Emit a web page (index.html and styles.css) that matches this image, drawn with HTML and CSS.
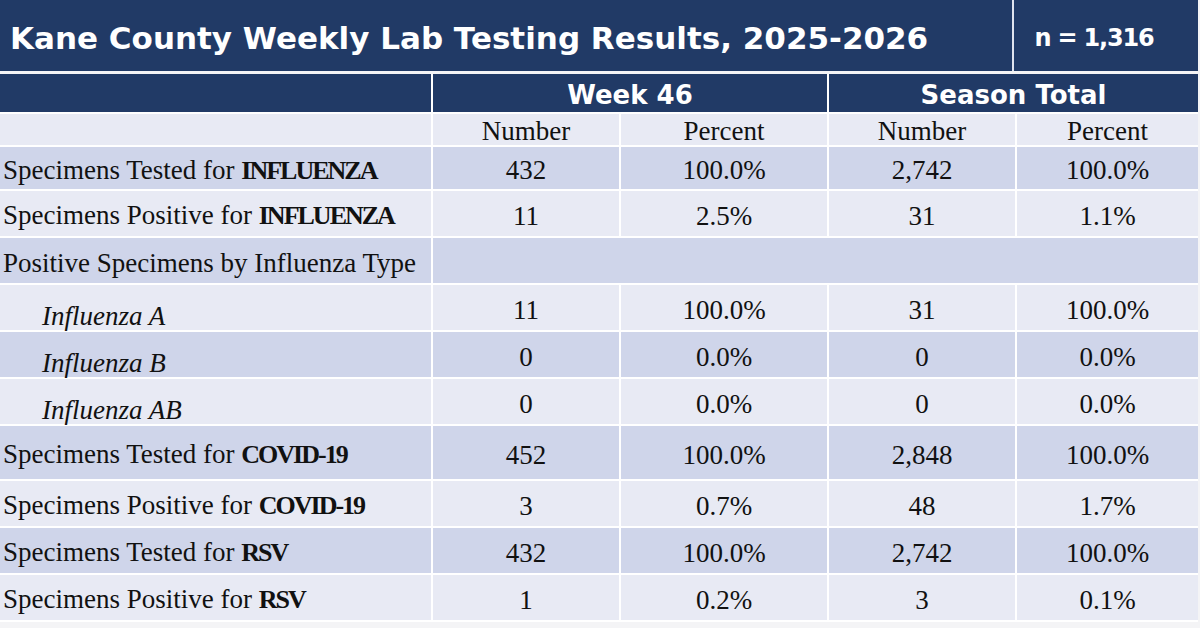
FILE: index.html
```html
<!DOCTYPE html>
<html lang="en">
<head>
<meta charset="utf-8">
<title>Kane County Weekly Lab Testing Results, 2025-2026</title>
<link rel="stylesheet" href="styles.css">
</head>
<body>
<div class="page">
  <header class="title-bar">
    <div class="title">Kane County Weekly Lab Testing Results, 2025-2026</div>
    <div class="count">n = 1,316</div>
  </header>
  <table class="results">
    <colgroup>
      <col class="c-label">
      <col class="c-num">
      <col class="c-pct">
      <col class="c-num2">
      <col class="c-pct2">
    </colgroup>
    <thead>
      <tr class="group-row">
        <th></th>
        <th colspan="2">Week 46</th>
        <th colspan="2">Season Total</th>
      </tr>
      <tr class="sub-row light">
        <th></th>
        <th>Number</th>
        <th>Percent</th>
        <th>Number</th>
        <th>Percent</th>
      </tr>
    </thead>
    <tbody>
      <tr class="dark r-first">
        <td class="label">Specimens Tested for <b>INFLUENZA</b></td>
        <td>432</td><td>100.0%</td><td>2,742</td><td>100.0%</td>
      </tr>
      <tr class="light r-std">
        <td class="label">Specimens Positive for <b>INFLUENZA</b></td>
        <td>11</td><td>2.5%</td><td>31</td><td>1.1%</td>
      </tr>
      <tr class="dark r-std">
        <td class="label">Positive Specimens by Influenza Type</td>
        <td colspan="4"></td>
      </tr>
      <tr class="light r-std">
        <td class="label sub">Influenza A</td>
        <td>11</td><td>100.0%</td><td>31</td><td>100.0%</td>
      </tr>
      <tr class="dark r-std">
        <td class="label sub">Influenza B</td>
        <td>0</td><td>0.0%</td><td>0</td><td>0.0%</td>
      </tr>
      <tr class="light r-std">
        <td class="label sub">Influenza AB</td>
        <td>0</td><td>0.0%</td><td>0</td><td>0.0%</td>
      </tr>
      <tr class="dark r-tall">
        <td class="label">Specimens Tested for <b>COVID-19</b></td>
        <td>452</td><td>100.0%</td><td>2,848</td><td>100.0%</td>
      </tr>
      <tr class="light r-std">
        <td class="label">Specimens Positive for <b>COVID-19</b></td>
        <td>3</td><td>0.7%</td><td>48</td><td>1.7%</td>
      </tr>
      <tr class="dark r-std">
        <td class="label">Specimens Tested for <b>RSV</b></td>
        <td>432</td><td>100.0%</td><td>2,742</td><td>100.0%</td>
      </tr>
      <tr class="light r-std">
        <td class="label">Specimens Positive for <b>RSV</b></td>
        <td>1</td><td>0.2%</td><td>3</td><td>0.1%</td>
      </tr>
    </tbody>
  </table>
</div>
</body>
</html>
```
FILE: styles.css
```css
html, body {
  margin: 0;
  padding: 0;
  background: #f3f3f5;
}

.page {
  width: 1200px;
  height: 628px;
  background: #f4f4f6;
  box-sizing: border-box;
  padding-right: 2px;
  overflow: hidden;
}

.title-bar {
  display: flex;
  height: 71px;
  background: #213a66;
  color: #ffffff;
  font-family: "DejaVu Sans", Verdana, sans-serif;
  font-weight: bold;
}

.title {
  width: 1014px;
  box-sizing: border-box;
  padding-left: 10px;
  padding-top: 5px;
  display: flex;
  align-items: center;
  font-size: 31px;
  border-right: 2px solid #dfe3ee;
}

.count {
  flex: 1;
  display: flex;
  align-items: center;
  justify-content: center;
  padding-top: 5px;
  padding-right: 24px;
  font-size: 24px;
  letter-spacing: -1.2px;
}

.results {
  width: 1198px;
  margin-top: 3px;
  border-collapse: collapse;
  table-layout: fixed;
  background: #ffffff;
  font-family: "Liberation Serif", "Times New Roman", serif;
  font-size: 27px;
  line-height: 28px;
  color: #111111;
}

.c-label { width: 432px; }
.c-num { width: 188px; }
.c-pct { width: 208px; }
.c-num2 { width: 188px; }
.c-pct2 { width: 182px; }

.results th,
.results td {
  border: 2px solid #ffffff;
  padding: 4px 0 0;
  text-align: center;
  vertical-align: middle;
  font-weight: normal;
}

.results tr > :first-child { border-left: 0; }
.results tr > :last-child { border-right: 0; }

.group-row {
  height: 39px;
  background: #213a66;
  color: #ffffff;
}

.group-row th {
  border-top: 0;
  border-bottom: 0;
  font-family: "DejaVu Sans", Verdana, sans-serif;
  font-weight: bold;
  font-size: 26px;
  padding-top: 4px;
}

.group-row th + th { border-left: 2px solid #d8dce8; }

.sub-row { height: 33px; }
.sub-row th { padding-top: 2px; }

.light { background: #e8eaf4; }
.dark { background: #cfd5ea; }

.r-first { height: 44px; }
.r-std { height: 47px; }
.r-tall { height: 55px; }

.results td.label {
  text-align: left;
  padding-left: 3px;
  white-space: nowrap;
}

.results td.label b {
  font-weight: bold;
  font-size: 26px;
  letter-spacing: -2px;
}

.results td.sub {
  font-style: italic;
  padding-left: 42px;
  padding-top: 16px;
}
```
